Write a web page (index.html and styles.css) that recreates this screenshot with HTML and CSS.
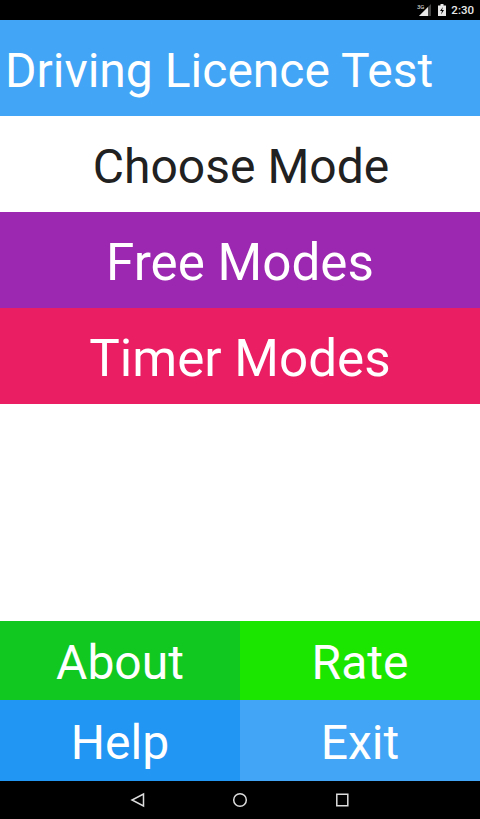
FILE: index.html
```html
<!DOCTYPE html>
<html lang="en">
<head>
<meta charset="utf-8">
<title>Driving Licence Test</title>
<link rel="stylesheet" href="styles.css">
</head>
<body>
<div class="screen">
  <header class="status">
    <span class="network">3G</span>
    <svg class="signal" viewBox="0 0 12 12" width="12" height="12"><path d="M12 0v12H0z" fill="#444"/><path d="M9 3v9H0z" fill="#e8e8e8"/></svg>
    <svg class="battery" viewBox="0 0 8 12" width="8" height="12"><path d="M0 1.500h2.500V0h3v1.500H8V12H0z" fill="#e8e8e8"/><path d="M5 3L2 7h2l-1 3.500 3-4.500H4z" fill="#000"/></svg>
    <span class="clock">2:30</span>
  </header>
  <main class="content">
    <h1 class="bar title"><span>Driving Licence Test</span></h1>
    <h2 class="bar choose"><span>Choose Mode</span></h2>
    <button class="bar free"><span>Free Modes</span></button>
    <button class="bar timer"><span>Timer Modes</span></button>
    <div class="actions">
      <button class="about"><span>About</span></button>
      <button class="rate"><span>Rate</span></button>
      <button class="help"><span>Help</span></button>
      <button class="exit"><span>Exit</span></button>
    </div>
  </main>
  <nav class="navbar">
    <svg viewBox="0 0 16 16" width="16" height="16"><path d="M13.500 2v12L2 8z"/></svg>
    <svg viewBox="0 0 16 16" width="16" height="16"><circle cx="8" cy="8" r="6.300"/></svg>
    <svg viewBox="0 0 16 16" width="16" height="16"><path d="M2.800 2.300h11v11.400h-11z"/></svg>
  </nav>
</div>
</body>
</html>
```
FILE: styles.css
```css
* { box-sizing: border-box; }
body { margin: 0; background: #fff; font-family: Roboto, sans-serif; }
.screen { display: flex; flex-direction: column; width: 480px; height: 819px; }
.status { display: flex; justify-content: flex-end; align-items: center; height: 20px; padding-right: 6px; background: #000; color: #e8e8e8; }
.network { align-self: flex-start; margin: 4px -5px 0 0; font-size: 6px; line-height: 6px; }
.clock { font-size: 11.500px; font-weight: 500; line-height: 12px; margin: 0 0 0 5px; }
.battery { margin-left: 7px; }
.content { flex: 1; display: flex; flex-direction: column; }
.bar { display: flex; align-items: center; justify-content: center; height: 96px; margin: 0; }
h1, h2, button { font: 400 48px/1 Roboto, sans-serif; color: #fff; border: 0; padding: 4px 0 0; white-space: nowrap; }
.title { justify-content: flex-start; padding-top: 5px; padding-left: 5px; background: #42a5f5; }
.choose { color: #212121; padding: 5px 0 0 2px; }
.free, .timer { font-size: 51.200px; padding-top: 6px; }
.free { background: #9c27b0; }
.timer { background: #e91e63; }
.actions { display: grid; grid-template-columns: 240px 240px; grid-template-rows: 79px 81px; margin-top: auto; }
.about, .rate { padding-top: 5px; }
.about { background: #10c820; }
.rate { background: #1be600; }
.help { background: #2196f3; }
.exit { background: #42a5f5; }
.navbar { display: flex; justify-content: center; align-items: center; gap: 86px; height: 38px; background: #000; }
.navbar svg { fill: none; stroke: #ddd; stroke-width: 1.500; }
```
